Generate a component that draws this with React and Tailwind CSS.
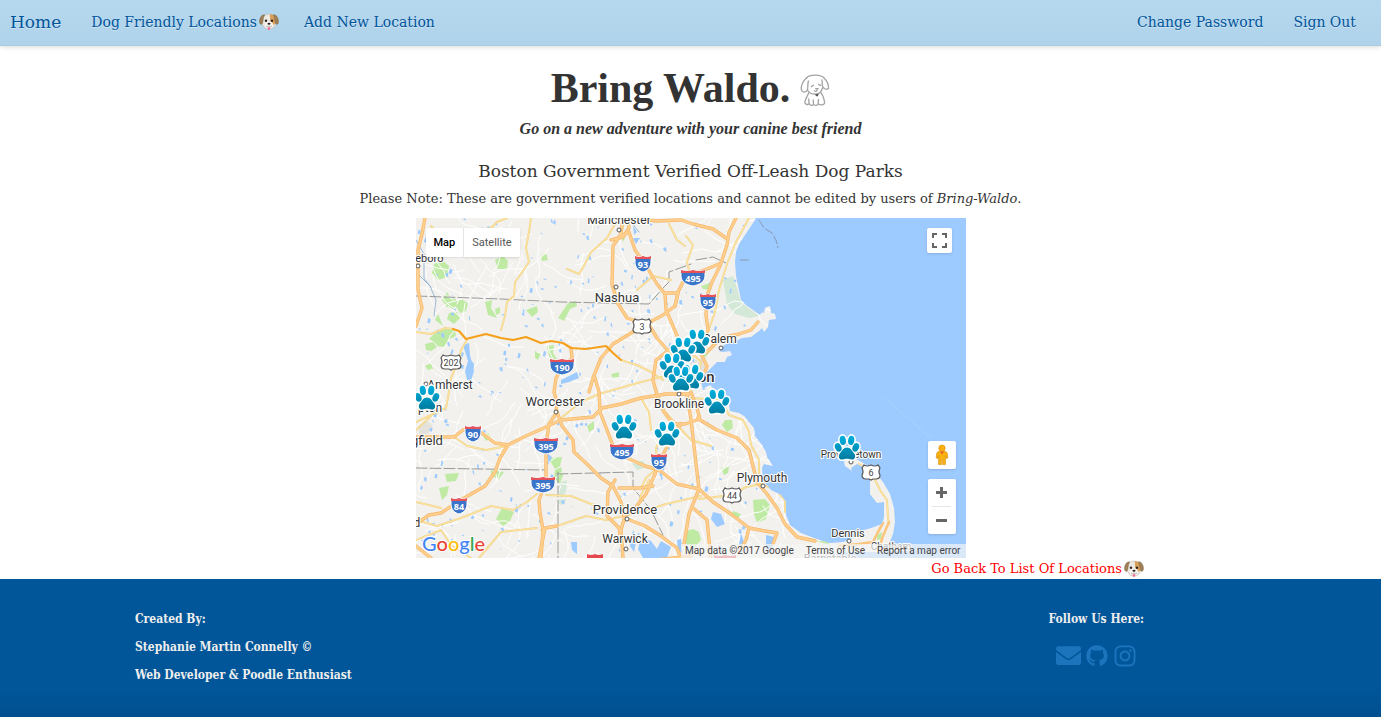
import React from "react";
import { FaEnvelope, FaGithub, FaInstagram } from "react-icons/fa";

/* ---------- map data (map canvas units) ---------- */

const LAND =
  "M415 218L755 218L752 223L748 229L742 238L738 244L735 252L734 262L735 276L738 290L740 300L745 305L752 310L759 315L764 308L769 306L770 313L774 314L775 319L768 320L767 327L763 332L761 328L758 331L750 337L741 338L735 341L728 342L722 346L718 351L722 352L729 351L731 355L726 357L724 362L716 362L711 367L706 372L702 375L700 382L702 390L709 387L716 390L723 392L720 397L728 404L729 411L738 413L743 416L748 422L753 428L754 436L761 445L765 452L766 457L772 466L763 464L761 468L762 480L764 483L770 490L780 495L785 502L785 515L789 525L800 533L813 538L828 543L842 542L852 538L860 531L870 528L881 524L883 517L883 502L876 503L872 498L869 494L869 482L870 473L864 468L856 464L850 468L851 471L844 466L843 462L847 458L855 459L864 464L873 471L882 482L889 494L893 508L894 522L892 534L888 544L884 552L850 552L820 556L810 558L415 558Z";

const HIGHWAYS = [
  "M424 218L421 234L417 250L417 290L421 308L415 326",
  "M622 218L620 234L612 246L611 284L616 302L626 318L648 325L656 338L668 352L676 368",
  "M620 236L628 232L634 250L644 264L656 284L664 294L665 310L672 326L678 340",
  "M636 218L655 221L680 220L692 224L712 229L725 238",
  "M610 240L622 237L628 228L626 218",
  "M735 218L728 232L726 245L719 266L711 282L706 296L705 315L707 330L698 345L690 352",
  "M588 392L592 378L600 358L612 344L640 327L662 315L674 306L677 293L665 293",
  "M674 306L677 292L682 282L692 274L706 269L718 264",
  "M570 348L571 358L561 368L555 378L553 392L556 402L555 412",
  "M415 437L453 437L462 430L474 429L482 434L494 443L507 445L525 436L543 428L560 420L592 417L601 408L620 404L640 398L665 394L688 394",
  "M507 445L499 458L494 472L484 486L458 501L440 513L428 515L415 524",
  "M556 412L548 424L545 446L545 482L538 500L539 512L542 530L540 558",
  "M556 412L561 426L572 440L573 452L588 466L600 478L612 486L620 502L624 520",
  "M594 378L598 392L599 412L606 430L612 446L626 458L644 466L658 470L676 484L698 489L712 502L730 514L748 528L764 531L776 533L772 544",
  "M684 344L668 350L655 360L652 380L656 395L663 412L672 424L684 424L696 420L698 416",
  "M680 424L670 440L660 458L654 474L645 494L634 508L624 516L620 530L622 558",
  "M690 392L696 408L699 420L716 430L736 438L748 450L752 466L756 482L766 494L776 508L784 524L796 537L814 541",
  "M686 395L690 420L694 455L698 489L688 514L683 544",
  "M692 508L706 520L708 540L710 558",
  "M748 528L745 540L738 552",
  "M624 518L644 526L660 536L676 548L680 558",
  "M614 480L607 492L606 516L618 528L620 540",
  "M618 488L640 488L652 486",
  "M698 345L706 352L720 338L738 334L750 330L757 322",
  "M694 388L702 378L706 366L698 350",
  "M538 558L544 528L556 526",
  "M415 546L430 558",
  "M655 560L690 556",
];

const MAJOR_ROADS = [
  "M530 218L528 232L525 248L528 262L520 274L514 282L513 296L506 302L504 316L500 330",
  "M506 218L496 222L490 228L470 232L452 230L440 236L430 226",
  "M415 332L430 334L444 328L452 329",
  "M466 340L460 350L458 360L450 378L448 392L445 408L432 414L415 422",
  "M415 430L430 416",
  "M615 222L606 238L590 252L584 264L578 274L566 269",
  "M765 224L745 240M748 218L734 244L726 264L718 290L714 312L707 332",
  "M680 360L694 356L700 362L697 374L696 388",
  "M620 360L636 365L650 372L662 380",
  "M560 418L580 402L598 394L640 382L665 376",
  "M690 398L720 400L728 415L742 420L748 432L750 445L758 460L758 475",
  "M698 499L730 495L745 487L760 484L775 490L784 500L784 512",
  "M415 520L436 526L460 518L490 506L512 510L526 502L536 494",
  "M545 495L570 496L590 504L605 508",
  "M540 530L562 524L585 516L605 520L640 512L665 504L700 496",
  "M415 540L440 530L450 545L470 558",
  "M478 558L500 532L536 528",
  "M452 436L466 446L485 450L506 446",
  "M657 470L655 448L661 438",
  "M685 236L692 245L686 262L690 278",
  "M664 412L690 440L710 446",
  "M640 488L645 478L654 470M636 512L640 495L648 480",
  "M415 502L440 508M640 398L648 412L650 430",
  "M668 224L676 240L684 246M636 290L652 276L670 280",
  "M858 464L872 476L879 490L886 500L887 518L888 524",
];

const PARKS =
  "M433 264l8-4l7 6l-2 11l-9 3l-6-7zM494 260l8-4l5 5l-1 8l-9 0zM441 300l5-8l3 6l6 1l1 5l-4 5l-6-2zM452 302l8-3l7 4l-2 8l-6 2l-3-5zM448 313l8-1l3 6l-6 6l-7-5zM484 302l7-2l-1 8l6 10l-9-3zM494 309l5-2l0 6l-4 2zM525 310l11-4l1 6l-6 5zM567 303l8-2l1 5l-7 3l-6 12l-6-3zM436 331l8-3l10 3l1 5l-8 4l-4 7l-6-1l-5-5l-4-2zM424 344l8-2l4 5l-6 4l-5-1zM540 256l5-3l2 7l-6 1zM434 320l8 6l-5-12zM546 346l7-1l-1 8l6 9l-6 3l-4-9zM534 351l6 2l-3 7l-3-2zM610 374l8-2l0 5l-6 2zM700 286l12-4l-2 8l-8-1zM545 455l6 3l10-1l-2 9l-5 3l-3-5zM554 470l6-3l2 8l-3 9l-6-6zM444 474l14-1l-3 8l-9 1zM438 488l10-2l-2 9l-5 5zM490 470l13 2l-5 7l-8-3zM501 508l12 4l-4 9l-7 5l-7-7zM724 420l7 0l1 8l-6 4l-5-7zM720 468l8-1l-1 6l-4 2zM752 500l12-1l5 6l-4 14l-9 4l-3-9zM732 511l8 3l-3 5l-7-2zM700 540l-2-8l-6-3l-7 2l0 13l8 4zM586 426l7-5l0 8l-5 3zM424 366l6-3l2 6l-5 1zM620 236l4 2l-2 4zM700 355l8-3l-3 5zM762 465l3 6l-3 2zM876 535l5-3l-1 7l-4 1zM815 541l14 0l-2 3zM482 436l5-3l3 4l-5 4z";

const MARSH =
  "M722 280l10-4l4 12l4 14l10 8l8 6l-10 2l-14-4l-8-10l-2-12zM560 482l6-2l-1 12l-5 6l-3-8zM558 500l8-1l-4 6l-6-2zM630 462l12-1l4 6l-10 3z";

const LAKES =
  "M462 345l6-2l1 12l4 16l-3 10l-4-1l-2-9l3-10zM470 360l3 4l-1 10l-4 0zM560 380l16-8l2 6l-10 4l-8 2zM640 538l10 3l6 8l4-8l10 6l-4 11l-24 0l-5-9zM632 530l4 8l-3 14l-4-6zM570 542l6 0l0 12l-5-4zM712 512l8 2l4 10l-8 3l-6-8zM740 533l3 9l-2 12l-3-9zM765 535l8 2l-2 14l-6-2zM632 226l4 6l-3 3zM676 540l4-1l2 14l-5-2zM632 238l7 0l-4 6zM545 452l6 5l-3 6zM690 372l6 4l-4 5z";

/* Small deterministic generator for the fine road mesh and the ponds. */
function makeRandom(seed) {
  let s = seed;
  return () => {
    s = (s * 1664525 + 1013904223) % 4294967296;
    return s / 4294967296;
  };
}

function makeStreets() {
  const r = makeRandom(41);
  let d = "";
  for (let i = 0; i < 290; i++) {
    let x = 412 + r() * 370;
    let y = 215 + r() * 345;
    let a = r() * Math.PI * 2;
    d += `M${x.toFixed(0)} ${y.toFixed(0)}`;
    for (let k = 0; k < 6; k++) {
      a += (r() - 0.5) * 0.9;
      x += Math.cos(a) * 7;
      y += Math.sin(a) * 7;
      d += `L${x.toFixed(0)} ${y.toFixed(0)}`;
    }
  }
  return d;
}

function makePonds() {
  const r = makeRandom(7);
  let d = "";
  for (let i = 0; i < 300; i++) {
    const x = 415 + r() * 355;
    const y = 218 + r() * 340;
    const w = 1 + r() * 2;
    const h = 1 + r() * 4;
    const k = r() * 3 - 1.5;
    d += `M${x.toFixed(1)} ${y.toFixed(1)}l${w.toFixed(1)} ${k.toFixed(1)}l${(-k).toFixed(1)} ${h.toFixed(1)}l${(-w).toFixed(1)} -1z`;
  }
  return d;
}

const STREETS = makeStreets();
const PONDS = makePonds();

const INTERSTATES = [
  [642, 264, "93"],
  [692, 278, "495"],
  [707, 302, "95"],
  [561, 367, "190"],
  [472, 434, "90"],
  [545, 446, "395"],
  [621, 452, "495"],
  [658, 462, "95"],
  [542, 485, "395"],
  [458, 506, "84"],
];

const US_ROUTES = [
  [641, 326, "3"],
  [450, 362, "202"],
  [731, 495, "44"],
  [870, 472, "6"],
];

const CITIES = [
  ["Manchester", 618, 224, 12],
  ["Nashua", 616, 302, 13],
  ["leboro", 427, 262, 11],
  ["Amherst", 449, 389, 12],
  ["Worcester", 554, 406, 13],
  ["Brookline", 678, 408, 12],
  ["Salem", 719, 343, 12],
  ["gfield", 426, 445, 13],
  ["Plymouth", 761, 482, 12],
  ["Provincetown", 850, 458, 10],
  ["Providence", 624, 514, 13],
  ["Warwick", 624, 543, 12],
  ["Dennis", 847, 537, 11],
  ["Chatham", 890, 550, 10],
  ["Barnstable", 829, 562, 11],
  ["d", 416, 527, 12],
];

const DOTS = [
  [618, 230], [615, 287], [417, 266], [425, 384], [555, 412], [678, 394],
  [720, 348], [762, 486], [626, 519], [625, 549], [848, 541], [850, 462],
];

const PAWS = [
  [696, 342], [682, 350], [671, 366], [690, 377], [680, 379],
  [716, 402], [426, 398], [623, 427], [666, 434], [846, 448],
];

/* ---------- drawings ---------- */

function Interstate({ x, y, label }) {
  const w = label.length > 2 ? 12 : 8;
  return (
    <g transform={`translate(${x} ${y})`}>
      <path
        d={`M${-w} -8Q${-w / 2} -6 0 -8Q${w / 2} -6 ${w} -8L${w} -2C${w} 4 ${w / 2} 7 0 8C${-w / 2} 7 ${-w} 4 ${-w} -2Z`}
        fill="#3a75c9"
        stroke="#fff"
        strokeWidth="1"
      />
      <path d={`M${-w} -8Q${-w / 2} -6 0 -8Q${w / 2} -6 ${w} -8V-5H${-w}Z`} fill="#e8535a" />
      <text y="4" textAnchor="middle" fontSize="9" fontWeight="700" fill="#fff" className="font-['Noto_Sans',sans-serif]">
        {label}
      </text>
    </g>
  );
}

function UsRoute({ x, y, label }) {
  const w = label.length > 2 ? 10 : 9;
  return (
    <g transform={`translate(${x} ${y})`}>
      <path
        d={`M${-w + 2} -7Q${-w / 2} -5 0 -7Q${w / 2} -5 ${w - 2} -7L${w} -4Q${w - 2} 0 ${w} 3Q${w} 7 ${w - 4} 7H2L0 8L-2 7H${-w + 4}Q${-w} 7 ${-w} 3Q${-w + 2} 0 ${-w} -4Z`}
        fill="#fff"
        stroke="#555"
        strokeWidth="1.2"
      />
      <text y="4" textAnchor="middle" fontSize="9" fill="#444">
        {label}
      </text>
    </g>
  );
}

function PawShape() {
  return (
    <>
      <ellipse cx="-8.8" cy="-0.6" rx="3.2" ry="4.4" transform="rotate(-22 -8.8 -0.6)" />
      <ellipse cx="8.8" cy="-0.6" rx="3.2" ry="4.4" transform="rotate(22 8.8 -0.6)" />
      <ellipse cx="-4.2" cy="-7.6" rx="3.1" ry="4.7" transform="rotate(-8 -4.2 -7.6)" />
      <ellipse cx="4.2" cy="-7.6" rx="3.1" ry="4.7" transform="rotate(8 4.2 -7.6)" />
      <path d="M0 -0.5C3.8 -0.5 5 3 7 5.2C9.2 8 8 11.8 4.8 11.5C2.6 11.2 1.6 10.8 0 10.8C-1.6 10.8 -2.6 11.2 -4.8 11.5C-8 11.8 -9.2 8 -7 5.2C-5 3 -3.8 -0.5 0 -0.5Z" />
    </>
  );
}

function Paw({ x, y }) {
  return (
    <g transform={`translate(${x} ${y})`}>
      <g fill="#fff" stroke="#fff" strokeWidth="3.2" strokeLinejoin="round">
        <PawShape />
      </g>
      <g fill="url(#paw)">
        <PawShape />
      </g>
    </g>
  );
}

function MapDrawing() {
  return (
    <svg
      viewBox="415 218 550 340"
      className="block h-full w-full font-['Roboto',sans-serif]"
      role="img"
      aria-label="Map of off-leash dog parks around Boston"
    >
      <defs>
        <clipPath id="land">
          <path d={LAND} />
        </clipPath>
        <linearGradient id="paw" gradientUnits="userSpaceOnUse" x1="0" y1="-12" x2="0" y2="12">
          <stop offset="0" stopColor="#00b0de" />
          <stop offset="1" stopColor="#007a9e" />
        </linearGradient>
      </defs>
      <rect x="415" y="218" width="550" height="340" fill="#9dcaff" />
      <path d={LAND} fill="#f2f1ed" />
      <g clipPath="url(#land)" fill="none" strokeLinejoin="round" strokeLinecap="round">
        <path d="M418 425l8-4l6 5l-5 8l-9 0zM690 362l14-6l2 20l-16 14l-14-6z" fill="#e4e2dc" />
        <path d={MARSH} fill="#d3e8d6" />
        <path d={PARKS} fill="#bfeaa3" />
        <path d={STREETS} stroke="#ffffff" strokeWidth="1" />
        <path d={PONDS} fill="#9dcaff" />
        <path d={LAKES} fill="#9dcaff" />
        <path
          d="M415 240l8 14l0 24l6 8l6 14l-2 16M418 275l12 12M630 222l8 10M690 382l8 -8l6 4"
          stroke="#9db9d8"
          strokeWidth="1"
        />
        <path
          d="M415 296L500 299L560 302L648 304L655 296L662 288L668 282L668 272L690 264M415 468L545 470M556 474L632 472L632 488L650 510L662 535M557 472L557 558M695 260L712 257L725 263"
          stroke="#999"
          strokeWidth="1"
          strokeDasharray="11 3"
        />
        {MAJOR_ROADS.map((d) => (
          <path key={d} d={d} stroke="#efd28b" strokeWidth="2" />
        ))}
        {MAJOR_ROADS.map((d) => (
          <path key={d} d={d} stroke="#ffe6a0" strokeWidth="1" />
        ))}
        {HIGHWAYS.map((d) => (
          <path key={d} d={d} stroke="#f7b76a" strokeWidth="3.4" />
        ))}
        {HIGHWAYS.map((d) => (
          <path key={d} d={d} stroke="#ffcf8d" strokeWidth="2" />
        ))}
        <path d="M882 523L877 532L872 542L858 544L838 546M888 522L882 536L878 548" stroke="#fcc57e" strokeWidth="2.6" />
        <path
          d="M452 329L458 331L465 339L485 334L500 338L512 340L525 337L540 343L550 341L562 343L570 348L585 349L605 346L612 353L620 360"
          stroke="#f6a11c"
          strokeWidth="2.2"
        />
      </g>
      <path
        d="M758 220L763 228L771 233L775 240L777 248M739 260H748"
        fill="none"
        stroke="#8a9bb0"
        strokeWidth="1"
        strokeDasharray="9 2"
      />
      <path d="M884 398L930 438" stroke="#c4dffc" strokeWidth="0.6" strokeDasharray="2 2" />
      <path d="M703 388l6-3l3 3l-5 2zM712 376l3 0l-2 3z" fill="#f2f1ed" />

      {DOTS.map(([x, y]) => (
        <circle key={`${x}-${y}`} cx={x} cy={y} r="2" fill="#fff" stroke="#555" strokeWidth="1" />
      ))}
      <g stroke="#fff" strokeWidth="2" strokeLinejoin="round" paintOrder="stroke" fill="#333">
        {CITIES.map(([name, x, y, size]) => (
          <text key={name} x={x} y={y} fontSize={size} textAnchor="middle">
            {name}
          </text>
        ))}
        <text x="690" y="382" fontSize="15" fontWeight="500" textAnchor="middle">
          Boston
        </text>
        <text x="417" y="412" fontSize="12">
          pton
        </text>
      </g>
      {INTERSTATES.map(([x, y, label]) => (
        <Interstate key={`${x}-${y}`} x={x} y={y} label={label} />
      ))}
      <path d="M586 558v-4q4 2 8 0q4 2 8 0v4z" fill="#e5484d" />
      <path d="M713 555q5 2 11 0q6 2 11 0v3h-22z" fill="#e5484d" />
      {US_ROUTES.map(([x, y, label]) => (
        <UsRoute key={label} x={x} y={y} label={label} />
      ))}
      {PAWS.map(([x, y]) => (
        <Paw key={`${x}-${y}`} x={x} y={y} />
      ))}
      <text
        x="421"
        y="551"
        fontSize="20"
        stroke="#fff"
        strokeWidth="2"
        paintOrder="stroke"
        className="font-['Lato',sans-serif] font-medium"
      >
        <tspan fill="#4285f4">G</tspan>
        <tspan fill="#ea4335">o</tspan>
        <tspan fill="#fbbc05">o</tspan>
        <tspan fill="#4285f4">g</tspan>
        <tspan fill="#34a853">l</tspan>
        <tspan fill="#ea4335">e</tspan>
      </text>
    </svg>
  );
}

function DogFace() {
  return (
    <svg viewBox="0 0 20 18" className="inline-block h-[18px] w-5 shrink-0" aria-hidden="true">
      <ellipse cx="10" cy="8.6" rx="7.2" ry="7.6" fill="#ece8e2" stroke="#b5aca0" strokeWidth="0.5" />
      <path d="M10.6 1.4C14 1 16.8 3.4 16.8 8C16.6 11.6 14.6 12.4 12.6 11C10.6 9.4 11.4 4.6 10.6 1.4Z" fill="#d9a05c" />
      <path d="M5.6 1.8C2.6 1.6 0.8 4.6 0.6 8.4C0.5 10.6 1.8 12 3 11C4.4 9.6 3.6 5.4 5.6 1.8Z" fill="#a08058" stroke="#76603c" strokeWidth="0.5" />
      <path d="M14.4 1.8C17.4 1.6 19.2 4.6 19.4 8.4C19.5 10.6 18.2 12 17 11C15.6 9.6 16.4 5.4 14.4 1.8Z" fill="#a08058" stroke="#76603c" strokeWidth="0.5" />
      <ellipse cx="10" cy="12" rx="4" ry="3.4" fill="#faf8f5" />
      <circle cx="7" cy="7.8" r="1.2" fill="#2b2320" />
      <circle cx="13" cy="7.8" r="1.2" fill="#2b2320" />
      <ellipse cx="10" cy="10.8" rx="1.6" ry="1" fill="#2b2320" />
      <path d="M7 13Q8.8 14.6 10 12.8Q11.2 14.6 13 13" fill="none" stroke="#8b7b70" strokeWidth="0.6" />
      <path d="M8.8 14.2H11.2V15.8Q10 18.2 8.8 15.8Z" fill="#f0679a" />
    </svg>
  );
}

function DogSketch() {
  return (
    <svg
      viewBox="0 0 30 34"
      className="mt-1 h-[34px] w-[30px]"
      fill="none"
      stroke="#a3a3a3"
      strokeWidth="1.3"
      strokeLinecap="round"
      strokeLinejoin="round"
      aria-hidden="true"
    >
      <path d="M6.5 5C9 1.6 21 0.6 24.5 5.5C27 8 28.6 12 28.6 15.4C26.6 17 23.6 16 22.6 13.6C22 11.6 22.4 9 22 7" />
      <path d="M6.5 5C3 8 1 13 1.4 17C2.6 19.8 6 19.6 7.4 17C8.2 14 7.4 11 8.4 8" />
      <path d="M7.4 17C9 20 12 21.2 15.4 21.2C19 21 21.6 18.6 22.4 15" />
      <path d="M11.4 13.6l2-1.4M18.6 11.4l2 1M15.6 15.6h2.6M17 16v1.6q-1.4 1.4-2.4 0.2" />
      <path d="M8.8 20C7.4 23 5 26.4 4.8 29.4C5 31.4 7.6 32 8.8 31M8.8 26C8.6 29 8.8 32.6 12.4 32.4C14 32 13.4 29.4 13.2 27M13.4 31.4C14.8 32.8 18 32.6 18.2 30.6L18.4 26.4M21 20C23 22 24 26 24.6 29.4C24.8 32 20.6 32.6 18.4 31" />
      <path d="M15.8 21.8l2.2-0.2l-1 1.2z" fill="#555" stroke="#555" />
    </svg>
  );
}

function Pegman() {
  return (
    <svg viewBox="0 0 14 22" className="h-[22px] w-[14px]" aria-hidden="true">
      <circle cx="7" cy="4.2" r="3.2" fill="#f9b011" stroke="#d98b00" strokeWidth="0.6" />
      <path
        d="M3.4 7.6H10.6Q12.2 8 12.4 10L12.8 14L11.2 14.4L10.4 11.6V20.6H7.6V15.6H6.4V20.6H3.6V11.6L2.8 14.4L1.2 14L1.6 10Q1.8 8 3.4 7.6Z"
        fill="#f9b011"
        stroke="#d98b00"
        strokeWidth="0.6"
      />
      <path d="M4.8 7.4L7 10.4L9.2 7.4Z" fill="#e8622a" />
    </svg>
  );
}

/* ---------- page ---------- */

const navLink = "flex items-center gap-[2px] text-[#00549a] hover:underline";
const mapButton = "flex items-center justify-center rounded-[2px] bg-white shadow";

export default function App() {
  return (
    <div className="flex min-h-screen flex-col bg-white font-['DejaVu_Serif',serif] text-[13px] leading-5 text-[#333]">
      <header className="border-b border-[#a9cbe2] bg-linear-to-b from-[#b6d8ef] to-[#afd3ea] shadow-[0_1px_5px_rgba(0,0,0,0.15)]">
        <nav className="flex h-[45px] items-center justify-between pb-[2px] pl-[10px] pr-[25px] text-[14px] [text-shadow:0_1px_0_rgba(255,255,255,0.4)]">
          <div className="flex items-center">
            <a href="#home" className="mr-[30px] text-[17px] text-[#00549a]">
              Home
            </a>
            <a href="#locations" className={navLink}>
              Dog Friendly Locations <DogFace />
            </a>
            <a href="#new" className="ml-[25px] text-[#00549a]">
              Add New Location
            </a>
          </div>
          <div className="flex items-center gap-[30px]">
            <a href="#password" className={navLink}>
              Change Password
            </a>
            <a href="#signout" className={navLink}>
              Sign Out
            </a>
          </div>
        </nav>
      </header>

      <main className="flex flex-col items-center pt-5">
        <h1 className="flex items-center gap-[10px] font-['Liberation_Serif',serif] text-[42px] font-bold leading-[44px]">
          Bring Waldo. <DogSketch />
        </h1>
        <p className="mt-[9px] font-['Liberation_Serif',serif] text-[16px] font-bold italic leading-5">
          Go on a new adventure with your canine best friend
        </p>
        <h2 className="mt-5 text-[17px] leading-6">Boston Government Verified Off-Leash Dog Parks</h2>
        <p className="mt-[6px] leading-5">
          Please Note: These are government verified locations and cannot be edited by users of <em>Bring-Waldo</em>.
        </p>

        <section
          aria-label="Map"
          className="relative mt-[9px] h-[340px] w-[550px] overflow-hidden font-['Roboto',sans-serif] text-[11px]"
        >
          <MapDrawing />
          <div className="absolute left-[10px] top-[10px] flex h-[29px] overflow-hidden rounded-[2px] bg-white shadow">
            <button type="button" className="border-r border-[#e5e5e5] px-2 font-medium text-black">
              Map
            </button>
            <button type="button" className="px-2 text-[#565656]">
              Satellite
            </button>
          </div>
          <button
            type="button"
            aria-label="Toggle fullscreen view"
            className={`${mapButton} absolute right-[14px] top-[10px] size-[25px]`}
          >
            <svg viewBox="0 0 15 15" className="size-[15px]" fill="none" stroke="#666" strokeWidth="2">
              <path d="M1 5V1H5M10 1H14V5M14 10V14H10M5 14H1V10" />
            </svg>
          </button>
          <div className="absolute bottom-6 right-[10px] flex flex-col gap-[10px]">
            <button type="button" aria-label="Street View" className={`${mapButton} size-7`}>
              <Pegman />
            </button>
            <div className="flex flex-col items-center rounded-[2px] bg-white shadow">
              <button type="button" aria-label="Zoom in" className="flex h-[27px] w-7 items-center justify-center">
                <svg viewBox="0 0 11 11" className="size-[11px]" stroke="#666" strokeWidth="3">
                  <path d="M0 5.5H11M5.5 0V11" />
                </svg>
              </button>
              <div className="h-px w-[19px] bg-[#e6e6e6]" />
              <button type="button" aria-label="Zoom out" className="flex h-[27px] w-7 items-center justify-center">
                <svg viewBox="0 0 11 11" className="size-[11px]" stroke="#666" strokeWidth="3">
                  <path d="M0 5.5H11" />
                </svg>
              </button>
            </div>
          </div>
          <div className="absolute bottom-0 right-0 flex h-[14px] items-center gap-3 bg-[#f5f5f5]/70 pl-1 pr-[5px] text-[10px] leading-[14px] text-[#444]">
            <span>Map data ©2017 Google</span>
            <a href="#terms">Terms of Use</a>
            <a href="#report">Report a map error</a>
          </div>
        </section>
        <div className="flex h-[21px] w-full justify-end pr-[237px]">
          <a href="#list" className="flex items-center gap-[2px] text-[#f00]">
            Go Back To List Of Locations <DogFace />
          </a>
        </div>
      </main>

      <footer className="flex flex-1 justify-between bg-linear-to-b from-[#005699] from-80% to-[#005090] pb-[28px] pl-[135px] pr-[237px] pt-[26px] font-['DejaVu_Serif_Condensed','DejaVu_Serif',serif] text-[12px] font-bold leading-7 text-[#eee]">
        <div>
          <p>Created By:</p>
          <p>Stephanie Martin Connelly ©</p>
          <p>Web Developer &amp; Poodle Enthusiast</p>
        </div>
        <div className="flex flex-col items-center">
          <p>Follow Us Here:</p>
          <div className="mt-[10px] flex items-center gap-[5px] text-[#1c75bc]">
            <a href="#email" aria-label="Email">
              <FaEnvelope className="size-[25px]" />
            </a>
            <a href="#github" aria-label="GitHub">
              <FaGithub className="size-[22px]" />
            </a>
            <a href="#instagram" aria-label="Instagram">
              <FaInstagram className="size-[24px]" />
            </a>
          </div>
        </div>
      </footer>
    </div>
  );
}
